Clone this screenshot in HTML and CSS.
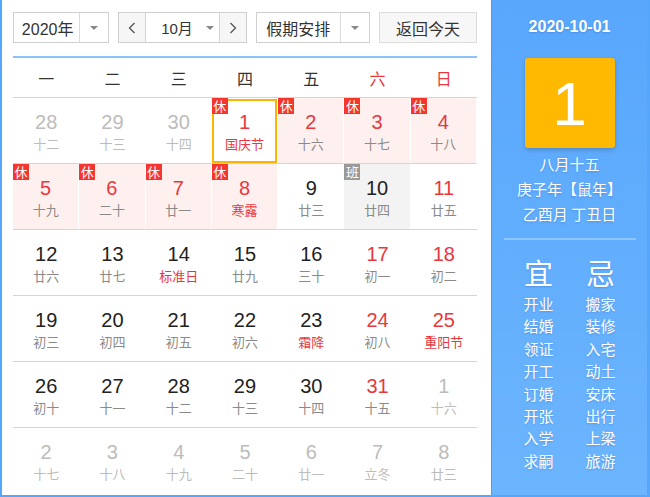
FILE: index.html
```html
<!DOCTYPE html>
<html lang="zh-CN">
<head>
<meta charset="utf-8">
<title>日历</title>
<link rel="stylesheet" href="styles.css">
</head>
<body>
<div class="widget">
  <div class="main">
    <div class="controls">
      <div class="select year">
        <span class="sel-text">2020年</span>
        <span class="sel-arrow"><i class="tri"></i></span>
      </div>
      <div class="select month">
        <span class="nav"><svg width="8" height="12" viewBox="0 0 8 12"><polyline points="6.5,1 1.5,6 6.5,11" fill="none" stroke="#555" stroke-width="1.3"/></svg></span>
        <span class="sel-text mtext">10月<i class="tri"></i></span>
        <span class="nav"><svg width="8" height="12" viewBox="0 0 8 12"><polyline points="1.5,1 6.5,6 1.5,11" fill="none" stroke="#555" stroke-width="1.3"/></svg></span>
      </div>
      <div class="select holiday">
        <span class="sel-text">假期安排</span>
        <span class="sel-arrow"><i class="tri"></i></span>
      </div>
      <div class="btn">返回今天</div>
    </div>
    <div class="weekdays">
      <span>一</span><span>二</span><span>三</span><span>四</span><span>五</span><span class="we">六</span><span class="we">日</span>
    </div>
    <div class="grid">
      <div class="cell other"><b>28</b><em>十二</em></div>
      <div class="cell other"><b>29</b><em>十三</em></div>
      <div class="cell other"><b>30</b><em>十四</em></div>
      <div class="cell rest sel red fest"><i class="tag">休</i><b>1</b><em>国庆节</em></div>
      <div class="cell rest red"><i class="tag">休</i><b>2</b><em>十六</em></div>
      <div class="cell rest red"><i class="tag">休</i><b>3</b><em>十七</em></div>
      <div class="cell rest red"><i class="tag">休</i><b>4</b><em>十八</em></div>

      <div class="cell rest red"><i class="tag">休</i><b>5</b><em>十九</em></div>
      <div class="cell rest red"><i class="tag">休</i><b>6</b><em>二十</em></div>
      <div class="cell rest red"><i class="tag">休</i><b>7</b><em>廿一</em></div>
      <div class="cell rest red fest"><i class="tag">休</i><b>8</b><em>寒露</em></div>
      <div class="cell"><b>9</b><em>廿三</em></div>
      <div class="cell work"><i class="tag">班</i><b>10</b><em>廿四</em></div>
      <div class="cell red"><b>11</b><em>廿五</em></div>

      <div class="cell"><b>12</b><em>廿六</em></div>
      <div class="cell"><b>13</b><em>廿七</em></div>
      <div class="cell fest"><b>14</b><em>标准日</em></div>
      <div class="cell"><b>15</b><em>廿九</em></div>
      <div class="cell"><b>16</b><em>三十</em></div>
      <div class="cell red"><b>17</b><em>初一</em></div>
      <div class="cell red"><b>18</b><em>初二</em></div>

      <div class="cell"><b>19</b><em>初三</em></div>
      <div class="cell"><b>20</b><em>初四</em></div>
      <div class="cell"><b>21</b><em>初五</em></div>
      <div class="cell"><b>22</b><em>初六</em></div>
      <div class="cell fest"><b>23</b><em>霜降</em></div>
      <div class="cell red"><b>24</b><em>初八</em></div>
      <div class="cell red fest"><b>25</b><em>重阳节</em></div>

      <div class="cell"><b>26</b><em>初十</em></div>
      <div class="cell"><b>27</b><em>十一</em></div>
      <div class="cell"><b>28</b><em>十二</em></div>
      <div class="cell"><b>29</b><em>十三</em></div>
      <div class="cell"><b>30</b><em>十四</em></div>
      <div class="cell red"><b>31</b><em>十五</em></div>
      <div class="cell other"><b>1</b><em>十六</em></div>

      <div class="cell other last"><b>2</b><em>十七</em></div>
      <div class="cell other last"><b>3</b><em>十八</em></div>
      <div class="cell other last"><b>4</b><em>十九</em></div>
      <div class="cell other last"><b>5</b><em>二十</em></div>
      <div class="cell other last"><b>6</b><em>廿一</em></div>
      <div class="cell other last"><b>7</b><em>立冬</em></div>
      <div class="cell other last"><b>8</b><em>廿三</em></div>
    </div>
  </div>
  <div class="panel">
    <div class="pdate">2020-10-01</div>
    <div class="bigday">1</div>
    <div class="lunar">
      <div>八月十五</div>
      <div>庚子年【鼠年】</div>
      <div>乙酉月 丁丑日</div>
    </div>
    <div class="divider"></div>
    <div class="yiji">
      <div class="col">
        <div class="head">宜</div>
        <div>开业</div><div>结婚</div><div>领证</div><div>开工</div><div>订婚</div><div>开张</div><div>入学</div><div>求嗣</div>
      </div>
      <div class="col">
        <div class="head">忌</div>
        <div>搬家</div><div>装修</div><div>入宅</div><div>动土</div><div>安床</div><div>出行</div><div>上梁</div><div>旅游</div>
      </div>
    </div>
  </div>
</div>
</body>
</html>
```

FILE: styles.css
```css
html, body {
  margin: 0;
  padding: 0;
  background: #fff;
}
body {
  font-family: "Liberation Sans", "Noto Sans CJK SC", sans-serif;
  color: #333;
}
.widget {
  display: flex;
  width: 650px;
  height: 497px;
  box-sizing: border-box;
  border: 2px solid #56a6fc;
  border-top: 0;
  border-right-width: 3px;
  overflow: hidden;
}
.main {
  width: 489px;
  box-sizing: border-box;
  padding: 12px 12px 0 11px;
}
.controls {
  display: flex;
  height: 31px;
}
.select {
  display: flex;
  height: 31px;
  box-sizing: border-box;
  border: 1px solid #cfcfcf;
  background: #fff;
  font-size: 15px;
  color: #333;
}
.sel-text {
  display: flex;
  align-items: center;
  justify-content: center;
}
.sel-arrow {
  display: flex;
  align-items: center;
  justify-content: center;
  width: 28px;
  border-left: 1px solid #dcdcdc;
}
.tri {
  display: block;
  width: 0;
  height: 0;
  border-left: 4px solid transparent;
  border-right: 4px solid transparent;
  border-top: 4px solid #888;
}
.year {
  width: 96px;
  font-size: 16px;
}
.year .sel-text {
  width: 66px;
  padding-left: 2px;
  box-sizing: border-box;
}
.month {
  width: 129px;
  margin-left: 9px;
}
.nav {
  display: flex;
  align-items: center;
  justify-content: center;
  width: 26px;
  background: #f6f6f6;
}
.mtext {
  width: 75px;
  border-left: 1px solid #d6d6d6;
  border-right: 1px solid #d6d6d6;
  gap: 13px;
  padding-left: 10px;
  box-sizing: border-box;
}
.holiday {
  width: 114px;
  margin-left: 9px;
  font-size: 16px;
}
.holiday .sel-text {
  width: 84px;
}
.holiday .sel-arrow {
  width: 29px;
}
.btn {
  display: flex;
  align-items: center;
  justify-content: center;
  width: 98px;
  height: 31px;
  box-sizing: border-box;
  margin-left: 9px;
  border: 1px solid #dcdcdc;
  background: #f7f7f7;
  font-size: 16px;
  color: #333;
}
.weekdays {
  display: grid;
  grid-template-columns: repeat(7, 1fr);
  margin-top: 13px;
  height: 42px;
  border-top: 2px solid #8cc3fb;
  border-bottom: 1px solid #d4d4d4;
  box-sizing: border-box;
  width: 464px;
}
.weekdays span {
  display: flex;
  align-items: center;
  justify-content: center;
  font-size: 16px;
  color: #333;
}
.weekdays .we {
  color: #e8383d;
}
.grid {
  display: grid;
  grid-template-columns: repeat(7, 1fr);
  grid-auto-rows: 66px;
  width: 464px;
}
.cell {
  position: relative;
  display: flex;
  flex-direction: column;
  align-items: center;
  box-sizing: border-box;
  border-bottom: 1px solid #d4d4d4;
  padding-top: 12px;
}
.cell.last {
  border-bottom: 0;
}
.cell b {
  font-weight: normal;
  font-size: 20px;
  line-height: 24px;
  color: #222;
}
.cell em {
  font-style: normal;
  font-size: 13px;
  line-height: 20px;
  color: #8a8a8a;
  font-family: "Noto Sans CJK SC", sans-serif;
}
.cell.red b {
  color: #e8383d;
}
.cell.fest em {
  color: #e8383d;
}
.cell.other b,
.cell.other em {
  color: #bcbcbc;
}
.cell.rest {
  background: #fff0f0;
  background-clip: padding-box;
  border-right: 1px solid #fff;
}
.cell.rest.sel {
  background: #fff;
}
.cell.sel::after {
  content: "";
  position: absolute;
  left: 0;
  top: 1px;
  right: 0;
  bottom: 0;
  border: 2px solid #fcb400;
}
.cell.work {
  background: #f3f3f3;
  background-clip: padding-box;
  border-right: 1px solid #fff;
}
.tag {
  position: absolute;
  left: 0;
  top: 0;
  width: 16px;
  height: 16px;
  font-style: normal;
  font-size: 13px;
  line-height: 16px;
  text-align: center;
  color: #fff;
  background: #f5362f;
  font-family: "Noto Sans CJK SC", sans-serif;
  z-index: 2;
}
.cell.work .tag {
  background: #999;
}
.panel {
  flex: 1;
  display: flex;
  flex-direction: column;
  align-items: center;
  background: linear-gradient(#58a7fd, #6cb5fe);
  border-left: 1px solid #4c9af2;
  color: #fff;
  text-shadow: 0 1px 2px rgba(0, 40, 120, 0.2);
}
.pdate {
  margin-top: 18px;
  font-size: 16px;
  font-weight: bold;
  line-height: 18px;
}
.bigday {
  margin-top: 22px;
  width: 90px;
  height: 90px;
  border-radius: 3px;
  background: #ffb900;
  box-shadow: 0 2px 4px rgba(0, 0, 0, 0.2);
  display: flex;
  align-items: center;
  justify-content: center;
  font-size: 62px;
  text-shadow: none;
}
.lunar {
  margin-top: 3px;
  text-align: center;
  font-size: 15px;
  line-height: 25px;
  font-family: "Noto Sans CJK SC", sans-serif;
}
.divider {
  margin-top: 12px;
  width: 132px;
  height: 2px;
  background: #8ec6fd;
}
.yiji {
  display: flex;
  gap: 32px;
  margin-top: 12px;
  font-family: "Noto Sans CJK SC", sans-serif;
}
.col {
  display: flex;
  flex-direction: column;
  align-items: center;
  font-size: 15px;
  line-height: 22.4px;
}
.col .head {
  font-size: 29px;
  line-height: 40px;
  margin-bottom: 1px;
}
```
